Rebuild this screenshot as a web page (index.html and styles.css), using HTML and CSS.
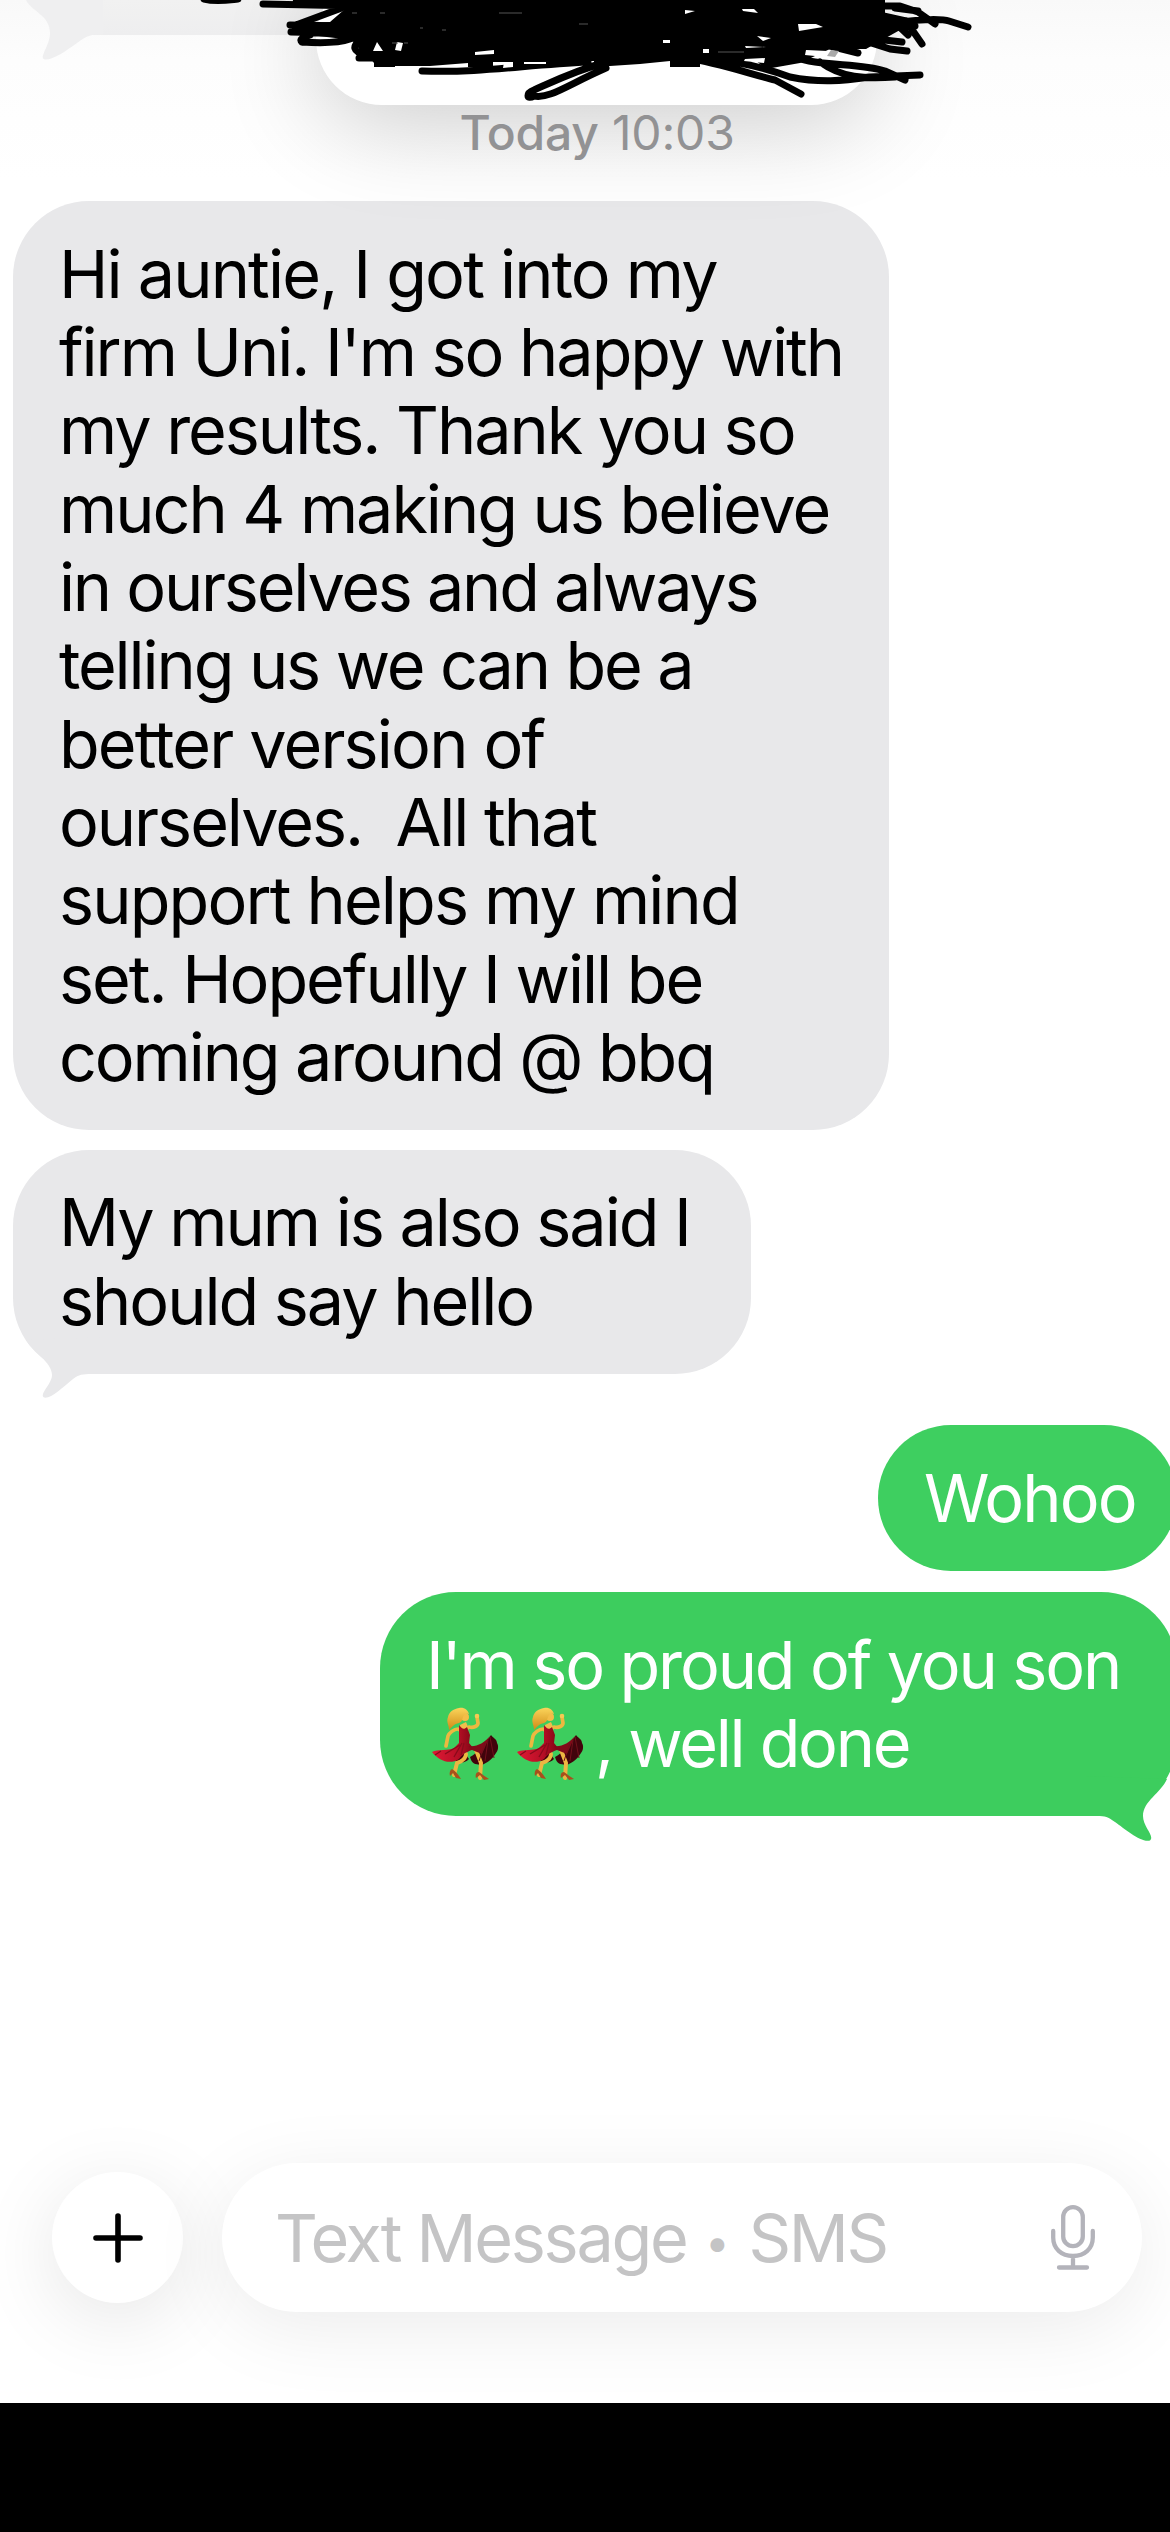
FILE: index.html
```
<!DOCTYPE html>
<html lang="en">
<head>
<meta charset="utf-8">
<title>Messages</title>
<link rel="stylesheet" href="styles.css">
</head>
<body>
<svg class="defs" width="0" height="0" aria-hidden="true">
  <defs>
    <linearGradient id="hair" x1="0" y1="0" x2="0" y2="1"><stop offset="0" stop-color="#fbd45a"/><stop offset="1" stop-color="#d08a16"/></linearGradient>
    <linearGradient id="skirt" x1="0" y1="0" x2="1" y2="0"><stop offset="0" stop-color="#e01a35"/><stop offset=".6" stop-color="#b80f26"/><stop offset="1" stop-color="#7d0714"/></linearGradient>
    <symbol id="dancer" viewBox="0 0 80 90">
      <path d="M44 57c8-4 17-16 21-22 2 3 6 4 6 8 2 3 1 8-1 10-3 5-7 9-14 12-8-1-10-1-12-8Z" fill="#41040c"/>
      <path d="M25 58l14-5 4 6c-3 3-6 4-11 3Z" fill="#41040c"/>
      <path d="M50 50l5 13-1 15M40 54c0 4-3 7-9 9l-3 12" fill="none" stroke="#edb642" stroke-width="4" stroke-linecap="round" stroke-linejoin="round"/>
      <path d="M53 72c-3 0-4 3-3 6l4-3 4 5 5-1c-3-2-6-4-10-7ZM26 69c-2 1-3 4-2 7l3-3 3 5 5 1c-2-3-4-7-9-10Z" fill="#a9501c"/>
      <path d="M34 25l6-3 3 7-6 5-5-3Z" fill="#f0bd4c"/>
      <path d="M32 29c-4 0-9 4-10 7l-2 10M43 27c5 1 9-1 9-4l-1-6" fill="none" stroke="#edb840" stroke-width="3.7" stroke-linecap="round" stroke-linejoin="round"/>
      <circle cx="51" cy="16" r="2.3" fill="#f6c953"/>
      <circle cx="39" cy="17" r="4" fill="#f3bd48"/>
      <path d="M33 8c5-1 9 2 10 6-3-1-5 0-6 3-1 3-1 5-4 6-5 1-7 4-10 7 0-5-3-8-1-13 1-5 5-8 11-9Z" fill="url(#hair)"/>
      <path d="M33 25c3 4 5 5 8 2l3 8-1 8 5 6c-6 3-10 3-15 10-9 6-20 2-27-7 6-3 16-1 22-4l5-5Z" fill="url(#skirt)"/>
      <path d="M36 43l-8 14M38 43l-3 12M34 45l-15 9M15 51l-6 4" fill="none" stroke="#880b1b" stroke-width="1.3"/>
      <path d="M43 46c8 1 15-3 21-10l-8 18-10-4Z" fill="#800b19"/>
      <path d="M64 37l4 21M62 40l-3 21M59 43l-6 18" stroke="#72101b" stroke-width="1"/>
    </symbol>
  </defs>
</svg>
<main class="screen">
  <header class="contact-pill"></header>
  <svg class="scribble" width="1170" height="110" viewBox="0 0 1170 110" aria-hidden="true">
    <path class="ink" d="M293 0H885V13L900 30 866 49H830L800 63 766 69 755 60 738 67H716V61L700 60V67H670V61L640 64 610 66H594V61L540 62H525V67H512V62H493V67H468V63L430 66 395 66V67H374V63L370 58 360 50 352 40 310 35 293 32 290 24 330 22 345 9 292 6Z"/>
    <g class="strokes">
      <path d="M204-1c12 3 24 1 34 0M263 4l98 2M296 25l43-16 18-8M291 32l85 2M290 25l58 1M302 42c-4-3 3-5 8-7M302 42c15 1 34 2 48-3l14-4"/>
      <path d="M368 36c-12 5-17 12-10 16l17 1M359 58h42M422 71c60 2 101-6 166-9M534 96c-8 4-8-3 0-6 18-8 42-20 76-29M534 96c16 3 33-11 72-28"/>
      <path d="M690 59c22 2 64 16 85 21l26 14M735 62c16 3 36 8 55 15 30 6 52 4 80 0l50-2M780 50c28 19 74 11 105 21l20 9M820 62c22 16 44 17 75 15M770 40l87 5M830 46l28 7M815 25l75 24 17 2M840 35l62 7M850 30l50-3 15-1M880 6h20l18 6 17 12M918 11l-23-3M870 13l36 8 16 23M890 18l18 17M900 22c22-3 43-3 49-1l19 6M850 5l45 20M881 25l1 11"/>
    </g>
    <path class="gap" d="M377 42l-4 9h10ZM397 42l-2 8 6 1 2-8ZM475 52l19-2v4l-19 1ZM504 62h9v5l-10 1ZM524 62h22v2h-22ZM663 40h7v3h-7ZM703 49h6v4h-6ZM685 10l10 1-10 3ZM742 9h12l4 4-15-2ZM798 24h18l7 3-24 4ZM757 36l14 2-8 3ZM745 46l21 1-20 1ZM745 59l20-1-1 5-20-2ZM806 50l22 1-3 6-20-2Z"/>
    <path class="glint" d="M352 13h5M380 13h5M499 13h23M579 24h9M420 28h3M442 30h4M392 43h6M404 43h4M718 52h26"/>
    <path d="M831 50l8 1-4 6-8-1Z" fill="#aaa"/>
  </svg>
  <section class="thread">
    <div class="earlier">
      <svg class="earlier-tail" width="90" height="62" viewBox="0 0 90 62"><path d="M13 0C18 11 37 15 37 33 37 46 25 58 32 59.500 40 60 53 51 64 43 75 35 78 34.500 90 34.500V0Z"/></svg>
    </div>
    <p class="stamp"><b>Today</b> 10:03</p>
    <div class="bubble received">
      <span class="l1">Hi auntie, I got into my</span>
      <span class="l2">firm Uni. I'm so happy with</span>
      <span class="l3">my results. Thank you so</span>
      <span class="l4">much 4 making us believe</span>
      <span class="l5">in ourselves and always</span>
      <span class="l6">telling us we can be a</span>
      <span class="l7">better version of</span>
      <span class="l8">ourselves.&nbsp; All that</span>
      <span class="l9">support helps my mind</span>
      <span class="l10">set. Hopefully I will be</span>
      <span class="l11">coming around @ bbq</span>
    </div>
    <div class="bubble received second">
      <span>My mum is also said I</span>
      <span>should say hello</span>
      <svg class="tail tail-left" width="92" height="62" viewBox="0 0 92 62"><path d="M13 3C20 15 39 25 39 38 39 47 26 57 31 60.500 38 62 49 51 60 42 68 36 71 37 92 37V0Z"/></svg>
    </div>
    <div class="bubble sent"><span class="w1">Wohoo</span></div>
    <div class="bubble sent proud">
      <span class="p1">I'm so proud of you son</span>
      <span class="p2"><svg class="emoji" role="img" aria-label="dancer"><use href="#dancer"/></svg><svg class="emoji" role="img" aria-label="dancer"><use href="#dancer"/></svg>, well done</span>
      <svg class="tail tail-right" width="92" height="66" viewBox="0 0 92 66"><path d="M81 3C75 17 57 25 57 40 57 51 69 60 64 64.500 55 67 39 53 29 46 19 39 20 40 0 40V0Z"/></svg>
    </div>
  </section>
  <footer class="composer">
    <button class="add" aria-label="Add"><svg width="50" height="50" viewBox="0 0 50 50"><path d="M25 3v44M3 25h44"/></svg></button>
    <div class="field">
      <span class="placeholder">Text Message<span class="dot"> • </span>SMS</span>
      <svg class="mic" width="46" height="66" viewBox="0 0 46 66"><rect x="13.200" y="2.200" width="19.600" height="39" rx="9.800"/><path d="M3.200 26v6.500c0 11 8 18.500 19.800 18.500s19.800-7.500 19.800-18.500V26M23 51v11M9 62.500h28"/></svg>
    </div>
  </footer>
  <div class="letterbox"></div>
</main>
</body>
</html>
```
FILE: styles.css
```
* { box-sizing: border-box; }
body { margin: 0; background: #fff; }
.defs { position: absolute; }
.screen {
  position: relative;
  display: flex;
  flex-direction: column;
  width: 1170px;
  height: 2532px;
  overflow: hidden;
  background: linear-gradient(#f9f9f9 0, #fdfdfd 60px, #fff 180px);
  font-family: Inter, "Liberation Sans", sans-serif;
  font-size: 66.500px;
  line-height: 78.33px;
  color: #000;
}
.contact-pill {
  position: absolute;
  z-index: 1;
  top: -27px;
  left: 316px;
  width: 561px;
  height: 132px;
  border-radius: 66px;
  background: #fff;
  box-shadow: 0 18px 100px rgba(0, 0, 0, .2);
}
.scribble { position: absolute; z-index: 2; top: 0; left: 0; }
.ink { fill: #000; }
.strokes { fill: none; stroke: #000; stroke-width: 7; stroke-linecap: round; stroke-linejoin: round; }
.gap { fill: #fff; }
.glint { stroke: #555; stroke-width: 1; }

.thread { display: flex; flex-direction: column; height: 2163px; align-items: flex-start; }
.earlier {
  position: relative;
  width: 640px;
  height: 34.500px;
  margin-left: 90px;
  background: linear-gradient(#f1f1f1, #eeeeef);
}
.earlier-tail { position: absolute; top: 0; left: -77px; fill: #efeff0; }
.stamp {
  position: relative;
  z-index: 2;
  align-self: center;
  margin: 65px 0 0 24px;
  height: 101.500px;
  font-size: 48px;
  line-height: 66px;
  letter-spacing: -.2px;
  color: #929294;
}
.stamp b { font-weight: 500; }

.bubble {
  position: relative;
  display: flex;
  flex-direction: column;
  padding: 33.600px 46px;
  border-radius: 76px;
  letter-spacing: -2.05px;
  white-space: nowrap;
}
.received { width: 876px; margin-left: 13px; background: #e8e8ea; }
.second { width: 738px; margin-top: 20px; }
.sent { width: 299px; height: 146px; margin: 51px 0 0 878px; padding-top: 34.500px; background: #3ecf60; color: #fff; }
.proud { width: 797px; height: 224px; margin: 21px 0 0 380px; background: #3dcd5e; }
.l1, .l7, .l9, .w1 { letter-spacing: -1.85px; }
.l5 { letter-spacing: -2.25px; }
.l6, .l11, .p1 { letter-spacing: -2.13px; }
.p2 { display: flex; letter-spacing: -2.3px; }
.tail { position: absolute; fill: #e8e8ea; }
.tail-left { left: 0; bottom: -25px; }
.tail-right { right: -1px; bottom: -26px; fill: #3dcd5e; }
.emoji { width: 80px; height: 90px; margin: -4px 4.500px 0 0; }

.composer { display: flex; align-items: center; gap: 39px; height: 149px; padding-left: 52px; }
.add {
  display: flex;
  align-items: center;
  justify-content: center;
  width: 131px;
  height: 131px;
  padding: 0;
  border: 0;
  border-radius: 50%;
  background: #fff;
  box-shadow: 0 16px 80px rgba(0, 0, 0, .1);
}
.add svg { fill: none; stroke: #000; stroke-width: 5.600; stroke-linecap: round; }
.field {
  display: flex;
  align-items: center;
  justify-content: space-between;
  width: 920px;
  height: 149px;
  padding: 0 46px 0 53px;
  border-radius: 75px;
  background: #fff;
  box-shadow: 0 16px 80px rgba(0, 0, 0, .08);
}
.placeholder { display: flex; height: 78px; color: #c4c4c5; letter-spacing: -2.3px; white-space: nowrap; }
.dot { width: 62px; font-size: 44px; letter-spacing: 0; text-align: center; padding-top: 4px; }
.mic { fill: none; stroke: #b3b3ba; stroke-width: 4.300; stroke-linecap: round; stroke-linejoin: round; }
.letterbox { position: relative; height: 129px; margin-top: 91px; background: #000; }
```
